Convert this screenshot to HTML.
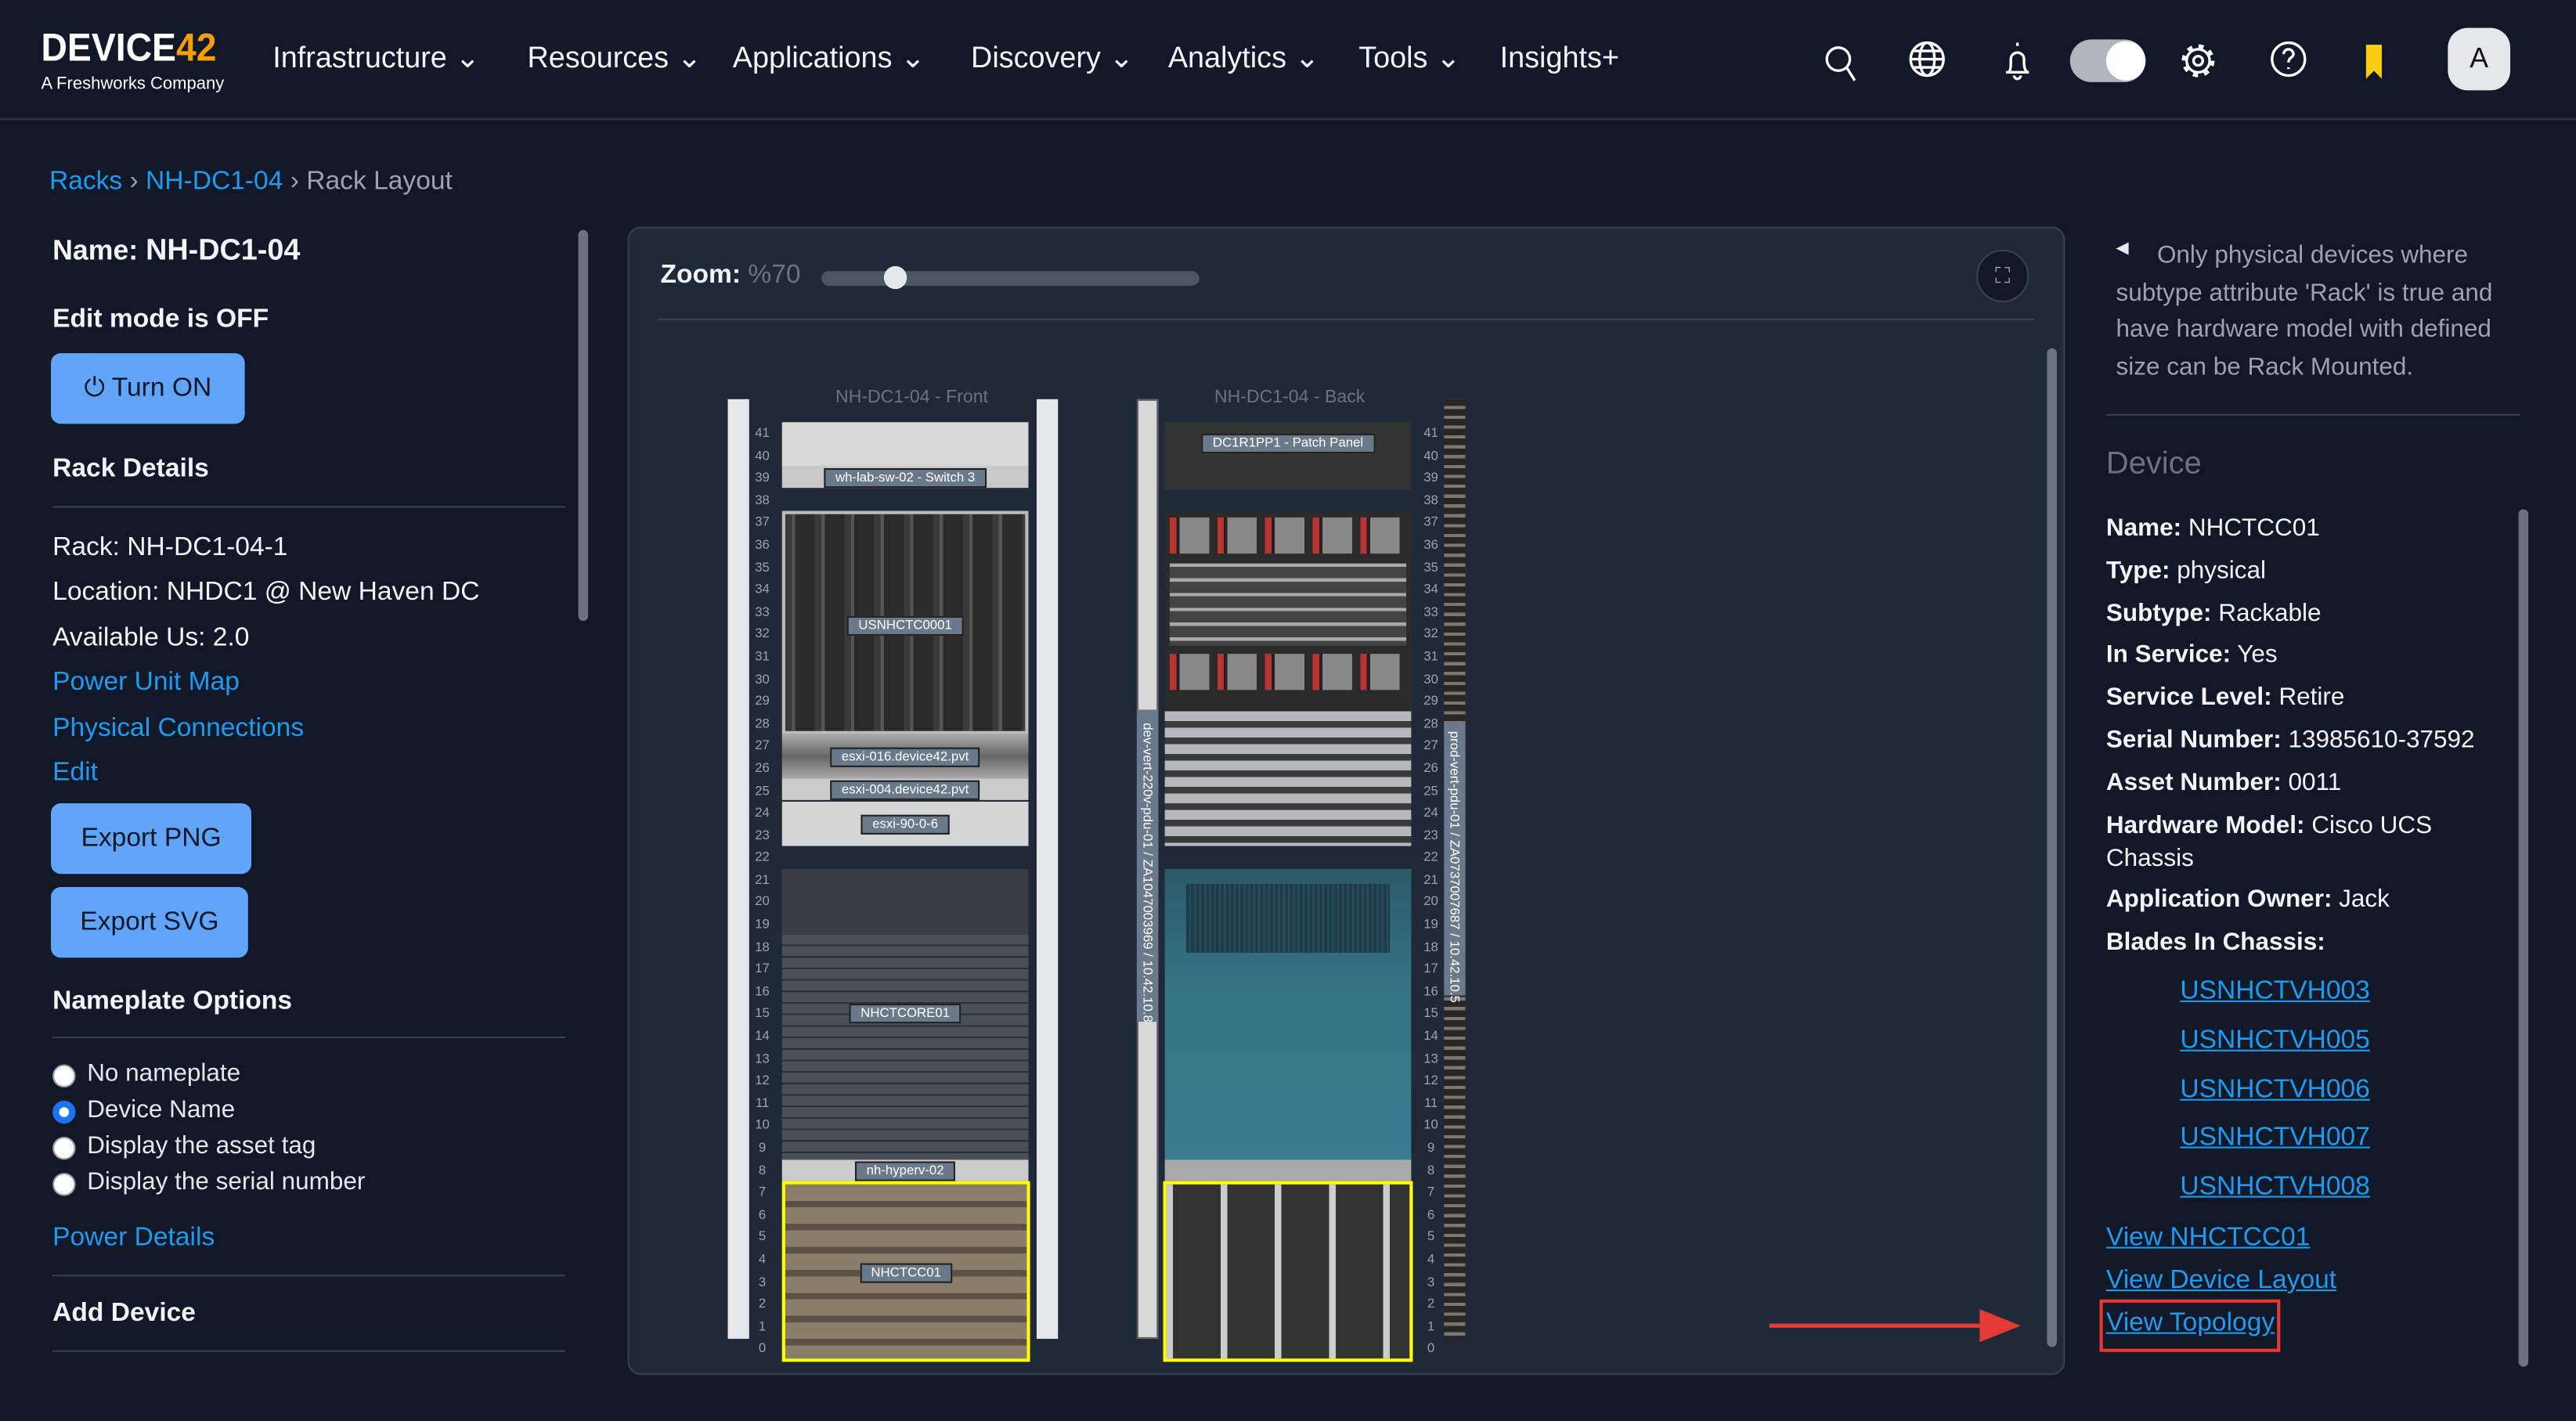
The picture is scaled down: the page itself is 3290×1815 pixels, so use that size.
<!DOCTYPE html>
<html><head><meta charset="utf-8"><style>
*{box-sizing:border-box;margin:0;padding:0}
html,body{width:3290px;height:1814px;background:#111827;overflow:hidden}
#w{position:absolute;left:0;top:0;width:1568px;height:865px;transform:scale(2.09821);transform-origin:0 0;font-family:"Liberation Sans",sans-serif;color:#e5e7eb}
.a{position:absolute}
.nav{font-size:18px;color:#f3f4f6;top:25px}
.lk{color:#1d9bf0}
.t{font-size:16px;color:#f3f4f6}
.b{font-weight:bold}
.btn{background:#60a5fa;color:#111827;border-radius:6px;font-size:16px;display:flex;align-items:center;justify-content:center}
.hr{height:1px;background:#374151}
.nums{font-size:8px;color:#9ca3af;line-height:13.6px;text-align:center;width:18px}
.lab{position:absolute;left:50%;transform:translateX(-50%);background:#6b7a8a;color:#fff;font-size:8px;padding:0 6px;border:1px solid #222;white-space:nowrap;line-height:10px}
.dev{position:absolute}
.radio{width:14px;height:14px;border-radius:50%;border:1px solid #9ca3af;background:#fff;position:absolute;left:0}
.rt{font-size:15px;color:#f3f4f6;position:absolute;left:1282px}
.u{color:#1d9bf0;text-decoration:underline;font-size:16px;position:absolute}
</style></head><body><div id="w">
<!-- header -->
<div class="a" style="left:25px;top:17px;font-size:24px;font-weight:bold;color:#fff;letter-spacing:0;line-height:26px;transform:scaleX(0.92);transform-origin:0 0">DEVICE<span style="color:#f59e0b">42</span></div>
<div class="a" style="left:25px;top:45px;font-size:10.5px;color:#fff">A Freshworks Company</div>
<div class="a nav" style="left:166px">Infrastructure ⌄</div>
<div class="a nav" style="left:321px">Resources ⌄</div>
<div class="a nav" style="left:446px">Applications ⌄</div>
<div class="a nav" style="left:591px">Discovery ⌄</div>
<div class="a nav" style="left:711px">Analytics ⌄</div>
<div class="a nav" style="left:827px">Tools ⌄</div>
<div class="a nav" style="left:913px">Insights+</div>
<svg class="a" style="left:1100px;top:22px" width="440" height="32" viewBox="0 0 440 32" fill="none" stroke="#fff" stroke-width="1.6">
<circle cx="19" cy="14" r="7"/><path d="M24 19l5 8"/>
<circle cx="73" cy="14" r="10"/><ellipse cx="73" cy="14" rx="4.5" ry="10"/><path d="M63 14h20M65 9h16M65 19h16"/>
<path d="M121 22h14M123 22c1-2 1-4 1-8a4 4 0 018 0c0 4 0 6 2 8M128 4v2M126 24a2 2 0 004 0"/>
<circle cx="238" cy="15" r="7"/><circle cx="238" cy="15" r="8.5" stroke-width="3" stroke-dasharray="3 3.7"/><circle cx="238" cy="15" r="2.8"/>
<circle cx="293" cy="14" r="10"/><path d="M290 11a3 3 0 116 0c0 2-3 2-3 5M293 19v1"/>
<path d="M341 6h8v18l-4-4-4 4z" fill="#facc15" stroke="#facc15"/>
</svg>
<div class="a" style="left:1260px;top:24px;width:46px;height:26px;border-radius:13px;background:#b0b4bb"></div>
<div class="a" style="left:1282px;top:25px;width:24px;height:24px;border-radius:12px;background:#fff"></div>
<div class="a" style="left:1490px;top:17px;width:38px;height:38px;border-radius:12px;background:#e5e7eb;color:#111;font-size:17px;text-align:center;line-height:38px">A</div>
<div class="a hr" style="left:0;top:72px;width:1568px;background:#2d3748"></div>

<!-- breadcrumb -->
<div class="a" style="left:30px;top:102px;font-size:16px;color:#9ca3af"><span class="lk">Racks</span> › <span class="lk">NH-DC1-04</span> › Rack Layout</div>

<!-- left -->
<div class="a t" style="left:32px;top:142px;font-size:17px"><span class="b">Name:</span> <b style="font-size:18px">NH-DC1-04</b></div>
<div class="a t b" style="left:32px;top:186px">Edit mode is OFF</div>
<div class="a btn" style="left:31px;top:215px;width:118px;height:43px">⏻ Turn ON</div>
<div class="a t b" style="left:32px;top:277px">Rack Details</div>
<div class="a hr" style="left:32px;top:308px;width:312px"></div>
<div class="a t" style="left:32px;top:325px">Rack: NH-DC1-04-1</div>
<div class="a t" style="left:32px;top:352px">Location: NHDC1 @ New Haven DC</div>
<div class="a t" style="left:32px;top:380px">Available Us: 2.0</div>
<div class="a t lk" style="left:32px;top:407px;color:#1d9bf0">Power Unit Map</div>
<div class="a t lk" style="left:32px;top:435px;color:#1d9bf0">Physical Connections</div>
<div class="a t lk" style="left:32px;top:462px;color:#1d9bf0">Edit</div>
<div class="a btn" style="left:31px;top:489px;width:122px;height:43px">Export PNG</div>
<div class="a btn" style="left:31px;top:540px;width:120px;height:43px">Export SVG</div>
<div class="a t b" style="left:32px;top:601px">Nameplate Options</div>
<div class="a hr" style="left:32px;top:631px;width:312px"></div>
<div class="a" style="left:32px;top:645px;width:300px;height:90px;font-size:15px;color:#e5e7eb">
<div class="radio" style="top:3px"></div><div class="a" style="left:21px;top:0">No nameplate</div>
<div class="radio" style="top:25px;border:4px solid #1d73f0"></div><div class="a" style="left:21px;top:22px">Device Name</div>
<div class="radio" style="top:47px"></div><div class="a" style="left:21px;top:44px">Display the asset tag</div>
<div class="radio" style="top:69px"></div><div class="a" style="left:21px;top:66px">Display the serial number</div>
</div>
<div class="a t" style="left:32px;top:745px;color:#1d9bf0">Power Details</div>
<div class="a hr" style="left:32px;top:776px;width:312px"></div>
<div class="a t b" style="left:32px;top:791px">Add Device</div>
<div class="a hr" style="left:32px;top:822px;width:312px"></div>
<div class="a" style="left:352px;top:140px;width:6px;height:238px;border-radius:3px;background:#6b7280"></div>

<!-- center panel -->
<div class="a" style="left:382px;top:138px;width:875px;height:699px;background:#1f2937;border:1px solid #374151;border-radius:8px"></div>
<div class="a t b" style="left:402px;top:159px">Zoom: <span style="color:#6b7280;font-weight:normal">%70</span></div>
<div class="a" style="left:500px;top:165px;width:230px;height:9px;border-radius:5px;background:#4b5563"></div>
<div class="a" style="left:538px;top:162px;width:14px;height:14px;border-radius:7px;background:#e5e7eb"></div>
<div class="a" style="left:1203px;top:152px;width:32px;height:32px;border-radius:16px;background:#111827;border:1px solid #374151;color:#9ca3af;font-size:13px;text-align:center;line-height:30px">⛶</div>
<div class="a hr" style="left:400px;top:194px;width:838px"></div>
<div class="a" style="left:1246px;top:212px;width:6px;height:608px;border-radius:3px;background:#6b7280"></div>

<!-- front rack -->
<div class="a" style="left:475px;top:236px;width:160px;text-align:center;font-size:11px;color:#6b7280">NH-DC1-04 - Front</div>
<div class="a" style="left:443px;top:243px;width:13px;height:572px;background:#e5e7eb"></div>
<div class="a" style="left:631px;top:243px;width:13px;height:572px;background:#e5e7eb"></div>
<div class="a nums" style="left:455px;top:257px">41<br>40<br>39<br>38<br>37<br>36<br>35<br>34<br>33<br>32<br>31<br>30<br>29<br>28<br>27<br>26<br>25<br>24<br>23<br>22<br>21<br>20<br>19<br>18<br>17<br>16<br>15<br>14<br>13<br>12<br>11<br>10<br>9<br>8<br>7<br>6<br>5<br>4<br>3<br>2<br>1<br>0</div>
<div class="dev" style="left:476px;top:257px;width:150px;height:27px;background:#d8d8d8"></div>
<div class="dev" style="left:476px;top:284px;width:150px;height:13px;background:#c9c9c9"><div class="lab" style="top:1px">wh-lab-sw-02 - Switch 3</div></div>
<div class="dev" style="left:476px;top:311px;width:150px;height:136px;background:repeating-linear-gradient(90deg,#3a3a3a 0 4px,#555 4px 6px,#2a2a2a 6px 18px);border:2px solid #bbb"><div class="lab" style="top:62px">USNHCTC0001</div></div>
<div class="dev" style="left:476px;top:447px;width:150px;height:27px;background:linear-gradient(#aaa,#666 50%,#aaa)"><div class="lab" style="top:8px">esxi-016.device42.pvt</div></div>
<div class="dev" style="left:476px;top:474px;width:150px;height:13px;background:#ccc"><div class="lab" style="top:1px">esxi-004.device42.pvt</div></div>
<div class="dev" style="left:476px;top:488px;width:150px;height:27px;background:#d5d5d5"><div class="lab" style="top:8px">esxi-90-0-6</div></div>
<div class="dev" style="left:476px;top:529px;width:150px;height:40px;background:#3b3f45"></div>
<div class="dev" style="left:476px;top:569px;width:150px;height:137px;background:repeating-linear-gradient(#4b5057 0 6px,#2d3035 6px 7px);"><div class="lab" style="top:42px">NHCTCORE01</div></div>
<div class="dev" style="left:476px;top:706px;width:150px;height:13px;background:#ccc"><div class="lab" style="top:1px">nh-hyperv-02</div></div>
<div class="dev" style="left:476px;top:719px;width:151px;height:110px;background:repeating-linear-gradient(#8a7d6a 0 10px,#5b5145 10px 14px);border:2px solid #ffff00"><div class="lab" style="top:48px">NHCTCC01</div></div>

<!-- back rack -->
<div class="a" style="left:705px;top:236px;width:160px;text-align:center;font-size:11px;color:#6b7280">NH-DC1-04 - Back</div>
<div class="a" style="left:692px;top:243px;width:13px;height:572px;background:#d8d8d8;border:1px solid #666"></div>
<div class="a" style="left:692px;top:432px;width:13px;height:190px;background:#6b7a8a"></div>
<div class="a" style="left:693px;top:440px;writing-mode:vertical-rl;font-size:8px;color:#fff;line-height:11px">dev-vert-220v-pdu-01 / ZA1047003969 / 10.42.10.8</div>
<div class="a nums" style="left:862px;top:257px">41<br>40<br>39<br>38<br>37<br>36<br>35<br>34<br>33<br>32<br>31<br>30<br>29<br>28<br>27<br>26<br>25<br>24<br>23<br>22<br>21<br>20<br>19<br>18<br>17<br>16<br>15<br>14<br>13<br>12<br>11<br>10<br>9<br>8<br>7<br>6<br>5<br>4<br>3<br>2<br>1<br>0</div>
<div class="a" style="left:879px;top:243px;width:13px;height:572px;background:repeating-linear-gradient(#2a2520 0 4px,#777 4px 6px)"></div>
<div class="a" style="left:879px;top:440px;width:13px;height:166px;background:#6b7a8a"></div>
<div class="a" style="left:880px;top:445px;writing-mode:vertical-rl;font-size:8px;color:#fff;line-height:11px">prod-vert-pdu-01 / ZA0737007687 / 10.42.10.5</div>
<div class="dev" style="left:709px;top:257px;width:150px;height:41px;background:#333"><div class="lab" style="top:7px">DC1R1PP1 - Patch Panel</div></div>
<div class="dev" style="left:709px;top:311px;width:150px;height:122px;background:#2b2b2b"></div>
<div class="dev" style="left:712px;top:315px;width:144px;height:22px;background:repeating-linear-gradient(90deg,#b33 0 4px,#222 4px 6px,#888 6px 24px,#2b2b2b 24px 29px)"></div>
<div class="dev" style="left:712px;top:343px;width:144px;height:50px;background:repeating-linear-gradient(#aaa 0 2px,#444 2px 9px)"></div>
<div class="dev" style="left:712px;top:398px;width:144px;height:22px;background:repeating-linear-gradient(90deg,#b33 0 4px,#222 4px 6px,#888 6px 24px,#2b2b2b 24px 29px)"></div>
<div class="dev" style="left:709px;top:433px;width:150px;height:82px;background:repeating-linear-gradient(#b5b8bc 0 6px,#3a3a3a 6px 10px)"></div>
<div class="dev" style="left:709px;top:529px;width:150px;height:177px;background:linear-gradient(#2a5a68,#347385 40%,#3a7d90)"></div>
<div class="dev" style="left:722px;top:538px;width:124px;height:42px;background:repeating-linear-gradient(90deg,#1f3d48 0 2px,#2a4f5c 2px 3px)"></div>
<div class="dev" style="left:709px;top:706px;width:150px;height:13px;background:#aaa"></div>
<div class="dev" style="left:708px;top:719px;width:152px;height:110px;background:repeating-linear-gradient(90deg,#ccc 0 4px,#333 4px 33px);border:2px solid #ffff00"></div>

<!-- right panel -->
<div class="a" style="left:1288px;top:146px;font-size:10px;color:#e5e7eb">◀</div>
<div class="a" style="left:1288px;top:145px;width:250px;font-size:15px;line-height:22.5px;color:#9ca3af;text-indent:25px">Only physical devices where subtype attribute 'Rack' is true and have hardware model with defined size can be Rack Mounted.</div>
<div class="a hr" style="left:1282px;top:252px;width:252px"></div>
<div class="a" style="left:1282px;top:272px;font-size:19px;color:#6b7280">Device</div>
<div class="rt" style="top:313px"><b>Name:</b> NHCTCC01</div>
<div class="rt" style="top:339px"><b>Type:</b> physical</div>
<div class="rt" style="top:365px"><b>Subtype:</b> Rackable</div>
<div class="rt" style="top:390px"><b>In Service:</b> Yes</div>
<div class="rt" style="top:416px"><b>Service Level:</b> Retire</div>
<div class="rt" style="top:442px"><b>Serial Number:</b> 13985610-37592</div>
<div class="rt" style="top:468px"><b>Asset Number:</b> 0011</div>
<div class="rt" style="top:493px;width:240px;line-height:20px"><b>Hardware Model:</b> Cisco UCS Chassis</div>
<div class="rt" style="top:539px"><b>Application Owner:</b> Jack</div>
<div class="rt" style="top:565px"><b>Blades In Chassis:</b></div>
<div class="u" style="left:1327px;top:595px">USNHCTVH003</div>
<div class="u" style="left:1327px;top:625px">USNHCTVH005</div>
<div class="u" style="left:1327px;top:655px">USNHCTVH006</div>
<div class="u" style="left:1327px;top:684px">USNHCTVH007</div>
<div class="u" style="left:1327px;top:714px">USNHCTVH008</div>
<div class="u" style="left:1282px;top:745px">View NHCTCC01</div>
<div class="u" style="left:1282px;top:771px">View Device Layout</div>
<div class="u" style="left:1282px;top:797px">View Topology</div>
<div class="a" style="left:1278px;top:791px;width:110px;height:32px;border:2px solid #e53935"></div>
<div class="a" style="left:1533px;top:310px;width:6px;height:522px;border-radius:3px;background:#6b7280"></div>
<svg class="a" style="left:1075px;top:795px" width="160" height="24"><path d="M2 12H135" stroke="#e53935" stroke-width="2.5"/><path d="M130 2L155 12 130 22z" fill="#e53935"/></svg>
</div></body></html>
